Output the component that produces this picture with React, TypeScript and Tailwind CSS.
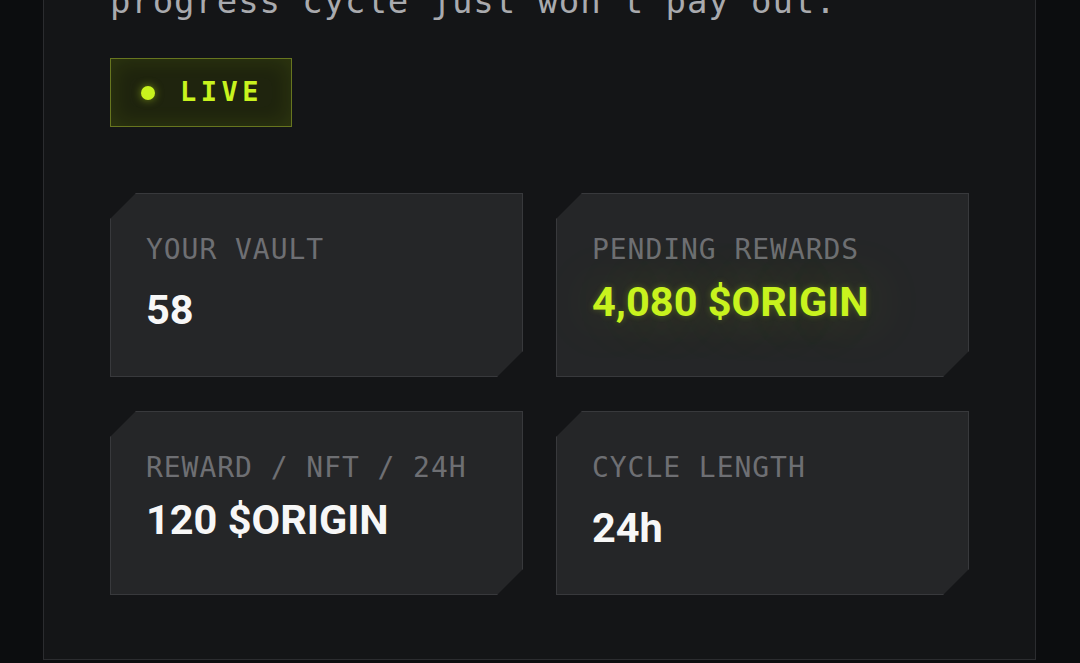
import type { ReactNode } from "react";

const mono = "font-['DejaVu_Sans_Mono','Liberation_Mono',monospace]";
const sans = "font-['Roboto','Liberation_Sans',sans-serif]";

type StatProps = {
  label: string;
  value: ReactNode;
  highlight?: boolean;
  tight?: boolean;
};

function StatCard({ label, value, highlight, tight }: StatProps) {
  return (
    <div className="h-[184px] border border-[#38393c] bg-[#252628] pl-[35px] pt-[39px] [clip-path:polygon(26px_0,100%_0,100%_calc(100%_-_26px),calc(100%_-_26px)_100%,0_100%,0_26px)]">
      <div
        className={`${mono} text-[28px] leading-[1.2] tracking-[0.95px] text-[#6e6f73]`}
      >
        {label}
      </div>
      <div
        className={`${sans} ${tight ? "mt-[10px]" : "mt-[18px]"} text-[41.5px] font-bold leading-[1.2] ${
          highlight
            ? "text-[#c8f31e] [text-shadow:0_0_6px_rgba(200,243,30,0.25),0_0_60px_rgba(200,243,30,0.3)]"
            : "text-[#f7f7f7]"
        }`}
      >
        {value}
      </div>
    </div>
  );
}

export default function App() {
  return (
    <div className="h-[663px] overflow-hidden bg-[#0c0d0f]">
      <div className="ml-[43px] mt-[-25px] w-[993px] border border-[#2b2c2f] bg-[#141517] px-[66px] pb-[64px]">
        {/* tail of the intro copy */}
        <p
          className={`${mono} whitespace-nowrap text-[34px] leading-[51px] tracking-[0.9px] text-[#a9aaae]`}
        >
          progress cycle just won't pay out.
        </p>

        {/* status badge */}
        <div className="mt-[31px] inline-flex h-[69px] items-center gap-[25px] border border-[#67751f] bg-[#1f240e] pl-[30px] pr-[28px] shadow-[inset_0_0_22px_rgba(200,243,30,0.1)]">
          <span className="h-[14px] w-[14px] rounded-full bg-[#c8f31e] shadow-[0_0_8px_rgba(200,243,30,0.5)]" />
          <span
            className={`${mono} text-[27px] font-bold tracking-[4.5px] text-[#c8f31e]`}
          >
            LIVE
          </span>
        </div>

        {/* stats */}
        <div className="mt-[66px] grid grid-cols-2 gap-x-[33px] gap-y-[34px]">
          <StatCard label="YOUR VAULT" value="58" />
          <StatCard
            label="PENDING REWARDS"
            value="4,080 $ORIGIN"
            highlight
            tight
          />
          <StatCard label="REWARD / NFT / 24H" value="120 $ORIGIN" tight />
          <StatCard label="CYCLE LENGTH" value="24h" />
        </div>
      </div>
    </div>
  );
}
